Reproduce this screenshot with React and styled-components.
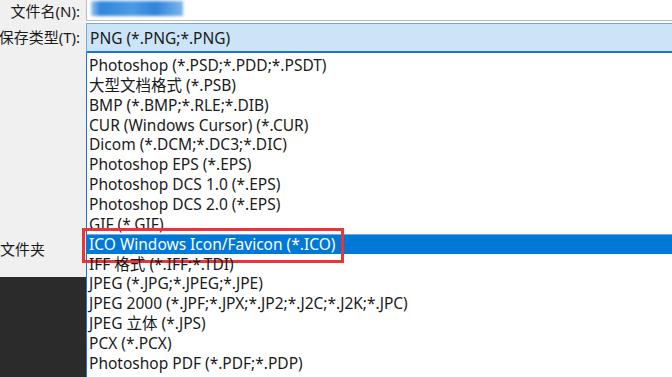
import styled, { createGlobalStyle } from "styled-components";

const GlobalStyle = createGlobalStyle`
  html, body {
    margin: 0;
    padding: 0;
    background: #ffffff;
  }
  body {
    font-family: "Noto Sans", "Noto Sans CJK SC", sans-serif;
  }
`;

const Page = styled.div`
  width: 672px;
  height: 377px;
  display: flex;
  overflow: hidden;
  font-size: 15.5px;
  color: #1a1a1a;
`;

const LeftPane = styled.div`
  width: 86px;
  flex-shrink: 0;
  display: flex;
  flex-direction: column;
  background: #f0f0f0;
`;

const Label = styled.div`
  height: ${(p) => p.h}px;
  display: flex;
  align-items: center;
  justify-content: ${(p) => (p.left ? "flex-start" : "flex-end")};
  padding-right: ${(p) => (p.left ? 0 : 6)}px;
  white-space: nowrap;
  font-size: 15px;
  line-height: 18px;
  color: #1a1a1a;
  margin-top: ${(p) => p.mt || 0}px;
  overflow: hidden;
`;

const Dark = styled.div`
  flex: 1;
  margin-top: 14px;
  background: #2b2b2b;
`;

const RightPane = styled.div`
  flex: 1;
  display: flex;
  flex-direction: column;
  min-width: 0;
`;

const NameInput = styled.div`
  height: 20px;
  border-bottom: 1px solid #bcbcbc;
  border-left: 1px solid #bcbcbc;
  background: #fff;
  display: flex;
  align-items: flex-start;
  padding-left: 4px;
`;

const Blurred = styled.div`
  width: 92px;
  height: 15px;
  margin-top: 1px;
  background: linear-gradient(90deg, #9cc8f0 0%, #2e86dc 10%, #4a9be4 45%, #2f84d9 70%, #7cb6ec 100%);
  filter: blur(1.5px);
`;

const Combo = styled.div`
  margin-top: 2px;
  height: 27px;
  background: #cce4f7;
  border-top: 1px solid #7fa9d3;
  border-left: 1px solid #7fa9d3;
  border-bottom: 2px solid #1c74cf;
  display: flex;
  align-items: center;
  padding-left: 3px;
  line-height: 18px;
  white-space: nowrap;
`;

const List = styled.div`
  flex: 1;
  border-left: 1px solid #1c74cf;
  background: #fff;
  padding-top: 2px;
  display: flex;
  flex-direction: column;
`;

const Item = styled.div`
  position: relative;
  height: 19.87px;
  flex-shrink: 0;
  display: flex;
  align-items: center;
  padding-left: 2px;
  line-height: 16px;
  white-space: nowrap;
  background: ${(p) => (p.selected ? "#0078d7" : "transparent")};
  color: ${(p) => (p.selected ? "#ffffff" : "#1a1a1a")};
  border-top: ${(p) => (p.selected ? "1px solid #6aaee6" : "none")};
  box-sizing: border-box;
`;

const Marker = styled.div`
  position: absolute;
  left: -5px;
  top: -7px;
  width: 256px;
  height: 29px;
  border: 3px solid #e8353a;
  pointer-events: none;
`;

const items = [
  "Photoshop (*.PSD;*.PDD;*.PSDT)",
  "大型文档格式 (*.PSB)",
  "BMP (*.BMP;*.RLE;*.DIB)",
  "CUR (Windows Cursor) (*.CUR)",
  "Dicom (*.DCM;*.DC3;*.DIC)",
  "Photoshop EPS (*.EPS)",
  "Photoshop DCS 1.0 (*.EPS)",
  "Photoshop DCS 2.0 (*.EPS)",
  "GIF (*.GIF)",
  "ICO Windows Icon/Favicon (*.ICO)",
  "IFF 格式 (*.IFF;*.TDI)",
  "JPEG (*.JPG;*.JPEG;*.JPE)",
  "JPEG 2000 (*.JPF;*.JPX;*.JP2;*.J2C;*.J2K;*.JPC)",
  "JPEG 立体 (*.JPS)",
  "PCX (*.PCX)",
  "Photoshop PDF (*.PDF;*.PDP)",
];

export default function App() {
  return (
    <Page>
      <GlobalStyle />
      <LeftPane>
        <Label h={21}>文件名(N):</Label>
        <Label h={32}>保存类型(T):</Label>
        <Label h={28} left mt={182}>
          文件夹
        </Label>
        <Dark />
      </LeftPane>
      <RightPane>
        <NameInput>
          <Blurred />
        </NameInput>
        <Combo>PNG (*.PNG;*.PNG)</Combo>
        <List>
          {items.map((t, i) => (
            <Item key={t} selected={i === 9}>
              {t}
              {i === 9 && <Marker />}
            </Item>
          ))}
        </List>
      </RightPane>
    </Page>
  );
}
